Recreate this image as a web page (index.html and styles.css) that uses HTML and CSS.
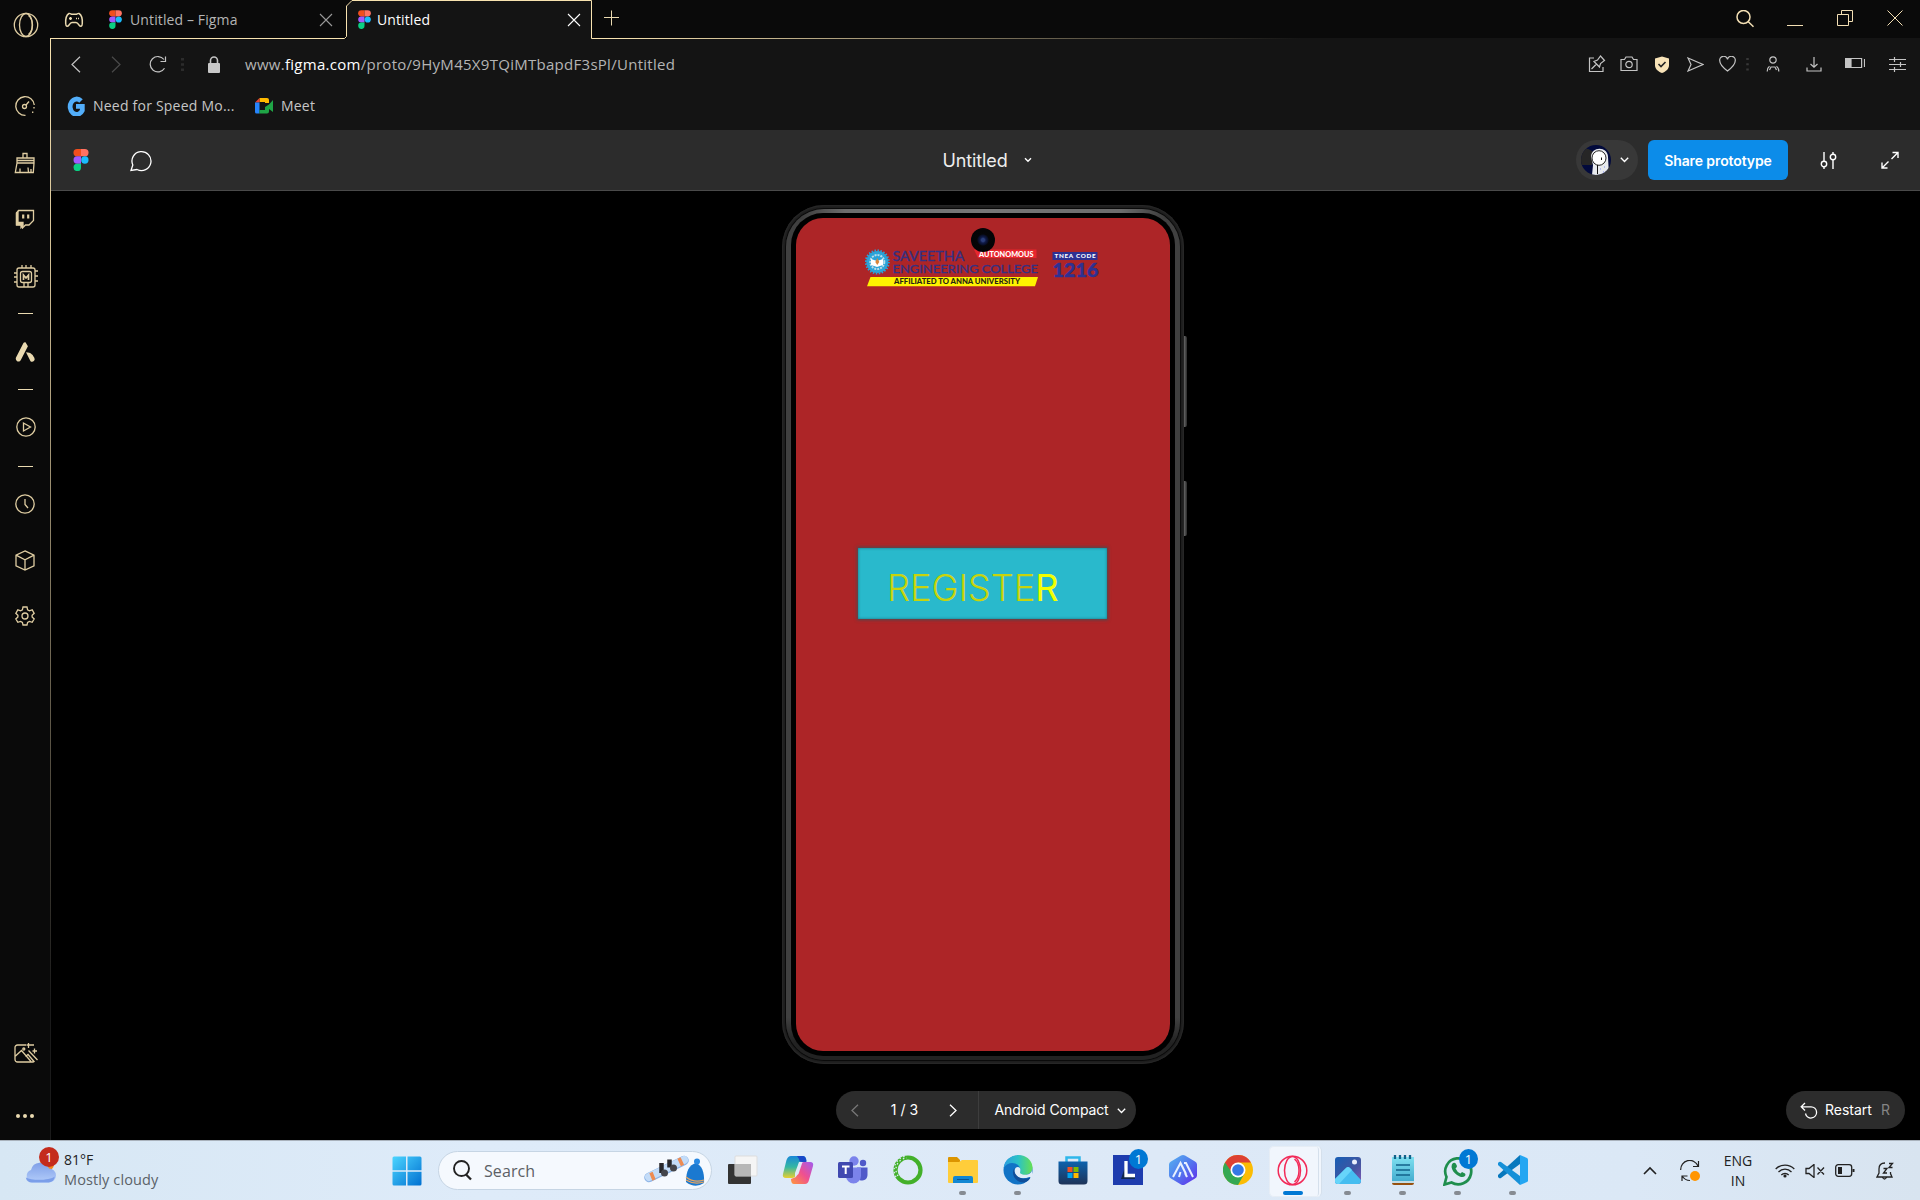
FILE: index.html
```html
<!DOCTYPE html>
<html lang="en">
<head>
<meta charset="utf-8">
<title>Untitled</title>
<link rel="stylesheet" href="styles.css">
</head>
<body>
<svg class="defs" width="0" height="0">
  <defs>
    <symbol id="figma" viewBox="0 0 14 20">
      <path d="M3.500 0H7v6.700H3.500a3.350 3.350 0 0 1 0-6.700z" fill="#f24e1e"/>
      <path d="M7 0h3.500a3.350 3.350 0 0 1 0 6.700H7z" fill="#ff7262"/>
      <path d="M3.500 6.700H7v6.600H3.500a3.300 3.300 0 0 1 0-6.600z" fill="#a259ff"/>
      <circle cx="10.500" cy="10" r="3.350" fill="#1abcfe"/>
      <path d="M3.500 13.300H7v3.350a3.400 3.400 0 1 1-3.500-3.350z" fill="#0acf83"/>
    </symbol>
    <linearGradient id="edgeX" gradientUnits="userSpaceOnUse" x1="50" y1="0" x2="1300" y2="0">
      <stop offset="0" stop-color="#f8e3b0"/><stop offset=".45" stop-color="#f8e3b0"/><stop offset="1" stop-color="#141414"/>
    </linearGradient>
    <linearGradient id="edgeY" gradientUnits="userSpaceOnUse" x1="0" y1="38" x2="0" y2="1000">
      <stop offset="0" stop-color="#f8e3b0"/><stop offset=".25" stop-color="#cdbb92"/><stop offset="1" stop-color="#1a1a1a"/>
    </linearGradient>
    <linearGradient id="win" x1="0" y1="0" x2="1" y2="1">
      <stop offset="0" stop-color="#4cd5ff"/><stop offset="1" stop-color="#0070d1"/>
    </linearGradient>
  </defs>
</svg>

<div class="desktop">
  <div class="browser">
    <aside class="sidebar">
      <div class="side s-opera"><svg width="26" height="26" viewBox="0 0 26 26"><circle cx="13" cy="13" r="11.700"/><ellipse cx="13" cy="13" rx="6.500" ry="11.500"/><path d="M15.500 3.500c5 4 5 15 0 19"/></svg></div>
      <div class="side s-gauge"><svg width="22" height="22" viewBox="0 0 22 22"><path d="M11.500 20.300A9.300 9.300 0 1 1 20.300 10"/><path d="M20 12v2.500M18.700 16.500v1.500" stroke-dasharray="1.500 1"/><circle cx="10.500" cy="11.500" r="2"/><path d="M12 10l3-3.500"/></svg></div>
      <div class="side s-broom"><svg width="22" height="22" viewBox="0 0 22 22"><path d="M9 6V1.500h4V6M3 6h17v5H3zM3 8.500h17M3 11L1.300 20.500h18L20 11M6 16.500v4M14 15.500l.500 5M17 17v3"/></svg></div>
      <div class="side s-twitch"><svg width="20" height="20" viewBox="0 0 20 20"><path d="M1.500 4l2-2.500h15v10L14 16h-3.500l-3 3v-3h-6z"/><path d="M3 3v10.500h5v3l-2 2v-3H1.500V4z" fill="#dfcda2"/><path d="M8.200 5.500v4M13.200 5.500v4" stroke-width="2.200"/></svg></div>
      <div class="side s-chip"><svg class="nudge" width="26" height="26" viewBox="0 0 26 26"><rect x="4" y="4" width="18" height="19" rx="2"/><rect x="7.500" y="7.500" width="11" height="11" rx="2"/><path d="M10.500 16v-5l2.500 3 2.500-3v5" stroke-width="1.700"/><path d="M1 9h3M1 13h3M1 18h3M22 7h3M22 12h3M22 17h3M9 1v3M13 1v3M18 1v3M11 19v4M15 19v4"/></svg></div>
      <div class="side s-dash1"><i></i></div>
      <div class="side s-aria"><svg width="20" height="20" viewBox="0 0 20 20"><path d="M10.500.300l2.400 3.900L5.700 18.200c-1.700 3-6 .300-4.700-2.700L8.200 1.500c.500-1 1.400-1.200 2.300-1.200z" fill="#eadab0" stroke="none"/><path d="M11 10.200c5 0 7.300 3 8.500 6.300.700 2.300-2 4.300-4 2.700z" fill="#eadab0" stroke="none"/></svg></div>
      <div class="side s-dash2"><i></i></div>
      <div class="side s-play"><svg class="nudge" width="20" height="20" viewBox="0 0 20 20"><circle cx="10" cy="10" r="9.200"/><path d="M7.500 6v8l7-4z"/></svg></div>
      <div class="side s-dash1"><i></i></div>
      <div class="side s-clock"><svg width="20" height="20" viewBox="0 0 20 20"><circle cx="10" cy="10" r="9.200"/><path d="M10 5v5.500l3 3.500"/></svg></div>
      <div class="side s-cube"><svg width="20" height="21" viewBox="0 0 20 21"><path d="M10 .900l9 4.300v10.600l-9 4.300-9-4.300V5.200zM1 5.200l9 4.600 9-4.600M10 9.800v10"/></svg></div>
      <div class="side s-gear"><svg width="20" height="20" viewBox="0 0 20 20"><circle cx="10" cy="10" r="3"/><path d="M8 1h4l.600 2.800 1.800 1 2.800-.900 2 3.400-2.100 1.900v1.800l2.100 1.900-2 3.400-2.800-.900-1.800 1L12 19H8l-.600-2.600-1.800-1-2.800.900-2-3.400L2.900 11V9.200L.800 7.300l2-3.400 2.800.900 1.800-1z"/></svg></div>
      <div class="side s-image"><svg class="nudge" width="24" height="22" viewBox="0 0 24 22"><path d="M12 3H3.500A2.500 2.500 0 0 0 1 5.500v12A2.500 2.500 0 0 0 3.500 20h15a2.500 2.500 0 0 0 2-1M1.500 14L7.500 8.500 17 19.500M11.500 14.500l2.500-2 6 7M14.500 8.500l9 9.500M14.500 1v5M12.500 3h4.500M20.500 6.500v5M18.500 9H23M17 3h3"/><circle cx="9.800" cy="7" r="1"/></svg></div>
      <div class="side s-dots"><svg width="18" height="4" viewBox="0 0 18 4"><g fill="#eadab0" stroke="none"><circle cx="2" cy="2" r="2"/><circle cx="9" cy="2" r="2"/><circle cx="16" cy="2" r="2"/></g></svg></div>
    </aside>

    <div class="window">
      <div class="tabstrip">
        <svg class="pad" width="20" height="16" viewBox="0 0 20 16"><path d="M5 1.500c1-.600 2 .800 3 .800h4c1 0 2-1.400 3-.800 2.500 1.500 3.500 6.500 3.300 10-.100 3.500-2 3.300-3.300 1.500-1-1.500-2-2.500-3-2.500H8c-1 0-2 1-3 2.500-1.300 1.800-3.200 2-3.300-1.500C1.500 8 2.500 3 5 1.500zM6.500 5v3M5 6.500h3M12 6.500h1M14 6.500h1"/></svg>
        <div class="tab first">
          <svg class="fav" width="13" height="19"><use href="#figma"/></svg>
          <span class="t-a">Untitled – Figma</span>
          <svg class="x" width="14" height="14" viewBox="0 0 14 14"><path d="M1 1l12 12M13 1L1 13"/></svg>
        </div>
        <div class="tab active">
          <svg class="fav" width="13" height="19"><use href="#figma"/></svg>
          <span class="t-b">Untitled</span>
          <svg class="x" width="14" height="14" viewBox="0 0 14 14"><path d="M1 1l12 12M13 1L1 13"/></svg>
        </div>
        <svg class="plus" width="16" height="16" viewBox="0 0 16 16"><path d="M7.500.500v15M0 7.500h15"/></svg>
        <div class="winbtns">
          <div><svg width="20" height="20" viewBox="0 0 20 20" stroke-width="1.500"><circle cx="8.500" cy="7" r="6.500"/><path d="M13.300 11.700l5.200 5"/></svg></div>
          <div><svg width="16" height="16" viewBox="0 0 16 16"><path d="M0 15.500h16"/></svg></div>
          <div><svg width="16" height="16" viewBox="0 0 16 16"><path d="M.500 4.500h11v11H.500zM4.500 4.500v-4h11v11h-4"/></svg></div>
          <div><svg width="16" height="16" viewBox="0 0 16 16"><path d="M.500.500l15 15M15.500.500l-15 15"/></svg></div>
        </div>
      </div>

      <div class="navbar">
        <svg class="n-back" width="10" height="17" viewBox="0 0 10 17"><path d="M9 .800L1 8.500l8 7.700"/></svg>
        <svg class="n-fwd" width="10" height="17" viewBox="0 0 10 17"><path d="M1 .800l8 7.700-8 7.700"/></svg>
        <svg class="n-rel" width="18" height="18" viewBox="0 0 18 18"><path d="M15.500 13.200A7.700 7.700 0 1 1 15 4.500M16.500 1.500v5h-5"/></svg>
        <svg class="n-sep" width="3" height="13" viewBox="0 0 3 13"><path d="M1.500 0v13" stroke-dasharray="2.500 2.700"/></svg>
        <svg class="n-lock" width="12" height="17" viewBox="0 0 12 17"><path d="M2.500 8V4.500a3.500 3.500 0 0 1 7 0V8"/><rect x="0" y="7" width="12" height="10" rx="1" fill="#c8c8c8" stroke="none"/></svg>
        <span class="url">www.<b>figma.com</b>/proto/9HyM45X9TQiMTbapdF3sPl/Untitled</span>
        <div class="tools">
          <div class="c24"><svg width="18" height="18" viewBox="0 0 18 18" stroke-width="1.300"><path d="M6 3H1.500v13.500H15V12M3.500 14l5-5M6 6.500l5.500 5.500 1-3.500 4-3-4-4.500-3 4z"/></svg></div>
          <div class="c40"><svg width="18" height="16" viewBox="0 0 18 16"><path d="M1 3.500h3.500L6 1h6l1.500 2.500H17v11H1z"/><circle cx="9" cy="8.500" r="3.200"/></svg></div>
          <div class="c26"><svg width="16" height="17" viewBox="0 0 16 17"><path d="M8 .500l7 2v6.500c0 4-3 6.500-7 8-4-1.500-7-4-7-8V2.500z" fill="#f8e3b8" stroke="none"/><path d="M4.500 8l2.500 2.500L11.500 6" stroke="#222" stroke-width="1.600"/></svg></div>
          <div class="c40"><svg width="17" height="15" viewBox="0 0 17 15"><path d="M1 1l15 6.500L1 14l3-6.500z"/></svg></div>
          <div class="c24"><svg width="17" height="16" viewBox="0 0 17 16"><path d="M8.500 15C3 10.800.800 8 .800 5A3.900 3.900 0 0 1 8.500 3.300 3.900 3.900 0 0 1 16.200 5c0 3-2.200 5.800-7.700 10z"/></svg></div>
          <div class="c16"><svg width="3" height="13" viewBox="0 0 3 13"><path d="M1.500 0v13" stroke="#383838" stroke-width="2.500" stroke-dasharray="2 3.300"/></svg></div>
          <div class="c36"><svg width="14" height="16" viewBox="0 0 14 16" stroke-width="1.500"><circle cx="7" cy="4" r="3.200"/><path d="M1.200 15.500c0-2.500.500-4 2.300-5.200M12.800 15.500c0-2.500-.500-4-2.300-5.200M3.500 14l1.500-3h4l1.500 3"/></svg></div>
          <div class="c45"><svg width="16" height="15" viewBox="0 0 16 15"><path d="M1 10.500v3.500h14v-3.500M8 0v10M4.500 7L8 10.300 11.500 7"/></svg></div>
          <div class="c38"><svg class="up" width="20" height="12" viewBox="0 0 20 12"><path d="M.600 1.500h16v9h-16zM19.500 2v8"/><path d="M1 2h5v8H1z" fill="#c4c4c4"/></svg></div>
          <div class="c46"><svg width="17" height="15" viewBox="0 0 17 15"><path d="M0 2.500h17M0 7.500h17M0 12.500h17M5.500 0v5M11.500 5v5M5.500 10v5"/></svg></div>
        </div>
      </div>

      <div class="bookmarks">
        <svg width="19" height="21" viewBox="0 0 19 21"><path d="M15 6A6.500 7.700 0 1 0 16.300 15.500v-4.200H10" fill="none" stroke="#52aefa" stroke-width="4.800"/></svg>
        <span class="bm-a">Need for Speed Mo...</span>
        <svg width="18" height="16" viewBox="0 0 18 16"><path d="M4.500 0H12q2 0 2 2v3h-4V4H4.500z" fill="#ffba00"/><path d="M4.500 0v4.500H0z" fill="#ea4335"/><path d="M0 4.500h4.500v11H1.500Q0 15.500 0 14z" fill="#2684fc"/><path d="M4.500 12H10V9l4-2.500L18 2v12l-4-3v2.500q0 2-2 2H4.500z" fill="#1fa546"/></svg>
        <span class="bm-b">Meet</span>
      </div>

      <div class="figbar">
        <div class="fig-left">
          <svg width="16" height="22"><use href="#figma"/></svg>
          <svg width="23" height="23" viewBox="0 0 23 23"><path d="M1 21.500l1.800-5.500A9.500 9.500 0 1 1 7 20.500z" fill="none" stroke="#fff" stroke-width="1.300"/></svg>
        </div>
        <div class="fig-title"><span>Untitled</span><svg width="8" height="6" viewBox="0 0 8 6"><path d="M1 1.200l3 3 3-3"/></svg></div>
        <div class="fig-right">
          <div class="avatar">
            <svg width="30" height="30" viewBox="0 0 30 30"><defs><clipPath id="av"><circle cx="15" cy="15" r="15"/></clipPath></defs><g clip-path="url(#av)"><path d="M0 0h30v30H0z" fill="#020a3c"/><path d="M0 6c5-4 9-2 13 2l-2 12H0z" fill="#262626"/><path d="M10 12C10 1 27 1 27 12l1 18H11l1-10z" fill="#e8eaee"/><ellipse cx="18" cy="13" rx="7" ry="7.300" fill="#fff" stroke="#222" stroke-width="1"/><path d="M16.500 20v9M20.500 12.500v2.500" stroke="#111"/><path d="M19 24h1M23 22h1M22 27h1" stroke="#7c8df0"/></g></svg>
            <svg width="9" height="6" viewBox="0 0 9 6"><path d="M.800.800l3.700 3.700L8.200.800"/></svg>
          </div>
          <button class="share">Share prototype</button>
          <svg class="sl" width="17" height="19" viewBox="0 0 17 19"><circle cx="4" cy="13" r="2.700"/><circle cx="13" cy="6" r="2.700"/><path d="M4 1v9.300M4 15.700V18M13 1v2M13 9v9"/></svg>
          <svg class="ex" width="20" height="19" viewBox="0 0 20 19"><path d="M12.500 1.500H18V7M18 1.500L11.500 8M2 11.500V17h5.500M2 17l6.500-6.500"/></svg>
        </div>
      </div>

      <main class="stage">
        <div class="phone">
          <div class="key k1"></div><div class="key k2"></div>
          <div class="bezel">
            <div class="screen">
              <div class="lens"></div>
              <svg class="crest" width="234" height="40" viewBox="865 248 234 40" font-family="Lato, sans-serif">
                <circle cx="877.300" cy="262" r="11" fill="#2aa3d8"/><circle cx="877.300" cy="262" r="11.500" fill="none" stroke="#2aa3d8" stroke-width="2" stroke-dasharray="1.500 1.500"/>
                <circle cx="877.300" cy="262" r="7" fill="none" stroke="#b9ddea" stroke-width="2" stroke-dasharray="2 1"/><path d="M871 259l6 2 6-2v6l-6 2-6-2z" fill="#fff"/><path d="M877.300 258l2 4-2 3-2-3z" fill="#d8863b"/>
                <g fill="#353082" stroke="#353082" stroke-width=".35">
                  <text x="892.500" y="260.900" font-size="13.800" textLength="72" lengthAdjust="spacingAndGlyphs">SAVEETHA</text>
                  <text x="892.500" y="272.800" font-size="12.300" textLength="145.500" lengthAdjust="spacingAndGlyphs">ENGINEERING COLLEGE</text>
                </g>
                <path d="M974 249.500h62.500v8.500H978z" fill="#e8262d"/>
                <text x="979" y="256.700" font-size="7" font-weight="900" fill="#fff" textLength="54.500" lengthAdjust="spacingAndGlyphs">AUTONOMOUS</text>
                <path d="M870.500 277H1038l-3 9.200H867z" fill="#fff200"/>
                <text x="894" y="283.900" font-size="7.400" font-weight="900" fill="#262216" textLength="126" lengthAdjust="spacingAndGlyphs">AFFILIATED TO ANNA UNIVERSITY</text>
                <path d="M1052.500 252h45v8h-45z" fill="#2e3192"/>
                <text x="1054.500" y="258.300" font-size="6.300" font-weight="900" fill="#fff" textLength="41" lengthAdjust="spacing">TNEA CODE</text>
                <text x="1052.500" y="277" font-size="19.500" font-weight="900" fill="#2e3192" stroke="#2e3192" stroke-width=".5" textLength="46" lengthAdjust="spacingAndGlyphs">1216</text>
              </svg>
              <div class="register"><span>REGISTE<b>R</b></span></div>
            </div>
          </div>
        </div>
        <div class="controls">
          <div class="pager">
            <svg class="dim" width="8" height="13" viewBox="0 0 8 13"><path d="M7 .800L1 6.500l6 5.700"/></svg>
            <span>1 / 3</span>
            <svg width="8" height="13" viewBox="0 0 8 13"><path d="M1 .800l6 5.700-6 5.700"/></svg>
          </div>
          <div class="flow"><span>Android Compact</span><svg width="9" height="6" viewBox="0 0 9 6"><path d="M.800.800l3.700 3.700L8.200.800"/></svg></div>
        </div>
        <div class="restart"><svg width="18" height="17" viewBox="0 0 18 17"><path d="M5 1L1.200 4.800 5 8.500M1.500 4.800H11a5.600 5.600 0 1 1-5.500 6.700"/></svg><span>Restart</span><em>R</em></div>
      </main>
    </div>
    <svg class="outline" width="1920" height="1140" viewBox="0 0 1920 1140"><path d="M50 38.500H344.500L346.500 36.500V6L352 .500H591.500V38.500H1920" stroke="url(#edgeX)"/><path d="M50 38h1v1102h-1z" fill="url(#edgeY)" stroke="none"/></svg>
  </div>

  <footer class="taskbar">
    <div class="weather">
      <svg width="36" height="38" viewBox="0 0 36 38"><defs><linearGradient id="cl" x1="0" y1="0" x2="0" y2="1"><stop offset="0" stop-color="#7f9fe8"/><stop offset="1" stop-color="#b3cdfa"/></linearGradient></defs><circle cx="22" cy="17" r="7" fill="#f7861b"/><path d="M7 35.500a6.500 6.500 0 0 1-1-12.500 9.500 9.500 0 0 1 18-1.500 7 7 0 0 1 0 14z" fill="url(#cl)"/><path d="M.800 30.500c6 3.500 24 3 29-1a7 7 0 0 1-6 6H7a6 6 0 0 1-6.200-5z" fill="#7b9ee9"/><circle cx="24" cy="10" r="10" fill="#c42b1c"/><text x="24" y="15" font-size="13" fill="#fff" text-anchor="middle" font-family="Open Sans, sans-serif">1</text></svg>
      <div><p class="deg">81°F</p><p class="sky">Mostly cloudy</p></div>
    </div>
    <div class="apps">
      <div class="start"><svg width="30" height="30" viewBox="0 0 30 30" fill="url(#win)"><path d="M2 .500h12v13.700H.500V2Q.500.500 2 .500zM15.500.500H28q1.500 0 1.500 1.500v12.200h-14zM.500 15.700H14v13.800H2Q.500 29.500.500 28zM15.500 15.700h14V28q0 1.500-1.500 1.500H15.500z"/></svg></div>
      <div class="search">
        <svg width="19" height="21" viewBox="0 0 19 21"><circle cx="8.500" cy="8.500" r="7.500" fill="none" stroke="#222" stroke-width="1.900"/><path d="M13 14.500l5 5" stroke="#222" stroke-width="2.300"/></svg>
        <span>Search</span>
        <svg class="snow" width="62" height="32" viewBox="0 0 62 32"><path d="M5 22.500L40 5.500" stroke="#8db4e6" stroke-width="9.500" stroke-linecap="round"/><path d="M5 22L40 5" stroke="#c3dcf8" stroke-width="8" stroke-linecap="round"/><path d="M7 17.500l3 7.500M35 3l3.500 7.500" stroke="#ed8b52" stroke-width="3.500"/><path d="M17.500 8v10M25.500 4.500v8" stroke="#27272b" stroke-width="4.500"/><circle cx="20.500" cy="18" r="3.500" fill="#44454b"/><circle cx="29.500" cy="13" r="3.500" fill="#44454b"/><path d="M42 27c0-11 3-17 10-19 7 3 8.500 11 8 20q-9 6-18-1z" fill="#1b79d0"/><circle cx="53" cy="6.500" r="3" fill="#2788e2"/><path d="M42 22c5 4 12 5 18 3M42 25c5 3 11 4 18 2" fill="none" stroke="#e9a660" stroke-width="1.200"/></svg>
      </div>
      <div class="app"><svg width="30" height="30" viewBox="0 0 30 30"><rect x="0" y="9" width="23" height="20" rx="1" fill="#333"/><rect x="7" y="1" width="22" height="20" rx="1" fill="#f5f5f5" stroke="#ddd"/><path d="M7 9h16v12H7z" fill="#b7b7b7"/></svg></div>
      <div class="app"><svg width="32" height="30" viewBox="0 0 32 30"><defs><linearGradient id="co" x1="0" y1="0" x2="0" y2="1"><stop stop-color="#1988d8"/><stop offset=".5" stop-color="#35b7a3"/><stop offset="1" stop-color="#e9d02f"/></linearGradient><linearGradient id="cp" x1="1" y1="0" x2="0" y2="1"><stop stop-color="#a05cf0"/><stop offset=".5" stop-color="#ef5090"/><stop offset="1" stop-color="#ff983c"/></linearGradient></defs><path d="M9 1h12q3 0 3.500 5l-6 1L14 20q-1 3-4 3H4q-4 0-3-4L4.500 5Q6 1 9 1z" fill="url(#co)"/><path d="M23 29H12q-3 0-3-5l5-2 4-12q1-3 4-3h6q4 0 3 4l-4 14q-1 4-4 4z" fill="url(#cp)"/><path d="M15 1h6q3 0 3.500 6H20q-3 0-3-3z" fill="#1848c8"/><path d="M13 18l4-11h3.500l-4 12-3.500 3z" fill="#dfeaf8"/></svg></div>
      <div class="app"><svg width="30" height="28" viewBox="0 0 30 28"><circle cx="25" cy="7" r="3.200" fill="#5059c9"/><circle cx="16" cy="5" r="4.700" fill="#7b83eb"/><path d="M19 11.500h10.500V19a5.500 5.500 0 0 1-8 5z" fill="#5059c9"/><path d="M8 11.500h15V20a7.500 7.500 0 0 1-15 0z" fill="#7b83eb"/><rect x="0" y="6" width="15" height="16" rx="1.500" fill="#4048b0"/><path d="M4 10.500h7.500M7.700 10.500V18" stroke="#fff" stroke-width="2"/></svg></div>
      <div class="app"><svg width="30" height="30" viewBox="0 0 30 30"><circle cx="15" cy="15" r="12.500" fill="none" stroke="#43b02a" stroke-width="4.200"/><path d="M3 22A14 14 0 0 1 14 1M5 21A11.500 11.500 0 0 1 14 3" fill="none" stroke="#dce9f6" stroke-width="1.300" stroke-dasharray="1.500 2.500"/></svg></div>
      <div class="app run"><svg width="32" height="28" viewBox="0 0 32 28"><path d="M1 2q0-1 1-1h8l3 3v6H1z" fill="#dc9500"/><path d="M1 6h11l3-2h15q1 0 1 1v21q0 1-1 1H2q-1 0-1-1z" fill="#ffcd3a"/><path d="M6 27v-5q0-2 2-2h16q2 0 2 2v5z" fill="#1287d3"/><path d="M10 23.500h12" stroke="#0a5592"/></svg></div>
      <div class="app run"><svg width="30" height="30" viewBox="0 0 30 30"><defs><linearGradient id="ed" x1="0" y1="0" x2="1" y2="0"><stop stop-color="#2b9de0"/><stop offset=".5" stop-color="#2bc2c7"/><stop offset="1" stop-color="#66e052"/></linearGradient></defs><circle cx="15" cy="15" r="14.500" fill="#1173c6"/><path d="M.700 13C2-4 28-4 29.500 12c.500 7-8 10-13 7-1-1 1-2 1-4C17 7 5 5 .700 13z" fill="url(#ed)"/><path d="M17.500 18.500c-1-1 0-2 0-3.500 0-3-3-4-5-2-4 6 3 13 14 9q1 0 .700 1l1.800-1V15c-1 5-8 6-11.500 3.500z" fill="#e0ecf8"/><path d="M11.500 13c-4 5 0 15 10 14.500q4-1 6-5C19 26 10 21 11.500 13z" fill="#104e9a"/></svg></div>
      <div class="app"><svg width="30" height="30" viewBox="0 0 30 30"><defs><linearGradient id="st" x1="0" y1="0" x2="0" y2="1"><stop stop-color="#0d62ad"/><stop offset="1" stop-color="#1e3358"/></linearGradient></defs><path d="M8.500 7V2.500h13V7" fill="none" stroke="#2fb7ea" stroke-width="2.500"/><path d="M.500 6.500h29V26q0 3.500-3.500 3.500H4Q.500 29.500.500 26z" fill="url(#st)"/><path d="M9.500 12h5v5h-5z" fill="#f25022"/><path d="M15.500 12h5v5h-5z" fill="#7fba00"/><path d="M9.500 18h5v5h-5z" fill="#00a4ef"/><path d="M15.500 18h5v5h-5z" fill="#ffb900"/></svg></div>
      <div class="app"><svg width="30" height="30" viewBox="0 0 30 30"><path d="M0 0h30v30H0z" fill="#1e3cae"/><path d="M9 21l3-9v10h10v2H8z" fill="#10264e"/><path d="M13 6v14.500h9" fill="none" stroke="#fff" stroke-width="3.300"/></svg><b class="badge">1</b></div>
      <div class="app"><svg width="28" height="30" viewBox="0 0 28 30"><defs><linearGradient id="hx" x1="0" y1="0" x2="1" y2="1"><stop stop-color="#56b4f0"/><stop offset=".5" stop-color="#5278ee"/><stop offset="1" stop-color="#6227ec"/></linearGradient></defs><path d="M12 .500q2-1 4 0l10 6q2 1 2 3v11q0 2-2 3l-10 6q-2 1-4 0l-10-6q-2-1-2-3v-11q0-2 2-3z" fill="url(#hx)"/><path d="M4 22l7.500-14 5.500 11M10 22l1.500-5M15 8h2l7 14M18 22l-2-4" fill="none" stroke="#e8f1ff" stroke-width="2"/></svg></div>
      <div class="app"><svg width="30" height="30" viewBox="0 0 30 30"><circle cx="15" cy="15" r="15" fill="#fbbc04"/><path d="M2 7.500A15 15 0 0 0 15 30l6.500-11.500L15 15z" fill="#34a853"/><path d="M2 7.500a15 15 0 0 1 26 0H15l-6 10z" fill="#dd4032"/><circle cx="15" cy="15" r="7.500" fill="#fff"/><circle cx="15" cy="15" r="5.800" fill="#3578e5"/></svg></div>
      <div class="app current"><svg width="31" height="31" viewBox="0 0 31 31" fill="none" stroke="#f22a58" stroke-width="1.500"><circle cx="15.500" cy="15.500" r="14.300"/><ellipse cx="15.500" cy="15.500" rx="8" ry="14"/><path d="M17.500 4c6 5 6 18 0 23"/></svg></div>
      <div class="app run"><svg width="26" height="27" viewBox="0 0 26 27"><defs><linearGradient id="ph" x1="0" y1="0" x2="1" y2="1"><stop stop-color="#175eb4"/><stop offset=".6" stop-color="#4355a0"/><stop offset="1" stop-color="#8358b6"/></linearGradient></defs><rect width="26" height="27" rx="3" fill="url(#ph)"/><path d="M0 22L11 11q2-2 4 0l11 12v1q0 3-3 3H3q-3 0-3-3z" fill="#45bdf0"/><path d="M0 22L11 11q2-2 4 0l2 2L4 27H3q-3 0-3-3z" fill="#67d5fa"/><circle cx="19.500" cy="5" r="2.500" fill="#e9effb"/></svg></div>
      <div class="app run"><svg width="22" height="31" viewBox="0 0 22 31"><defs><linearGradient id="np" x1="0" y1="0" x2="0" y2="1"><stop stop-color="#7fe0f0"/><stop offset="1" stop-color="#3fa9cd"/></linearGradient></defs><path d="M0 25h22v3q0 2-2 2H2q-2 0-2-2z" fill="#96510f"/><rect y="2" width="22" height="26" fill="url(#np)"/><path d="M0 27h22" stroke="#eee" stroke-width="1.500"/><path d="M3 0v4M8 0v4M13 0v4M18 0v4" stroke="#12628a" stroke-width="2.300"/><path d="M4 10h14M4 15h14M4 20h14" stroke="#12628a" stroke-width="1.700"/></svg></div>
      <div class="app run"><svg width="30" height="31" viewBox="0 0 30 31"><path d="M1.500 29.500l2-7.500A13 13 0 1 1 8.500 27.500z" fill="none" stroke="#1f8e4d" stroke-width="2.700"/><path d="M10 8q2-1 3 1l1 2q0 1-1.500 2.500 1.500 3.500 5 5L19 17l3 1.500q1 1 0 2.500c-2 2-5 1-8-1s-5-5-5.500-8q0-3 1.500-4z" fill="#1f8e4d"/></svg><b class="badge">1</b></div>
      <div class="app run"><svg width="30" height="30" viewBox="0 0 30 30"><path d="M22 0l7 3q1 .500 1 1.500v21q0 1-1 1.500l-7 3z" fill="#24a6f2"/><path d="M22 0v9L3 23q-1 .500-2 0l-1-1q-.500-1 0-2z" fill="#0878bd"/><path d="M22 30v-9L3 7Q2 6.500 1 7L0 8q-.500 1 0 2z" fill="#1690d8"/></svg></div>
    </div>
    <div class="tray">
      <svg width="14" height="9" viewBox="0 0 14 9"><path d="M1 8l6-6 6 6" stroke-width="1.600"/></svg>
      <svg class="sync" width="20" height="22" viewBox="0 0 20 22"><path d="M.700 10A9 9 0 0 1 18 6M18.500 1v5.500H13M10 20.500Q5 20.500 2 16M2 21v-5h5.500" stroke-width="1.200"/><circle cx="15" cy="16" r="5" fill="#ff9500" stroke="none"/></svg>
      <div class="lang">ENG<br>IN</div>
      <svg class="wifi" width="20" height="15" viewBox="0 0 20 15"><path d="M.700 6a13 13 0 0 1 18.600 0M3.500 9a9 9 0 0 1 13 0M6.300 12a5.300 5.300 0 0 1 7.400 0"/><circle cx="10" cy="13" r="1.600" fill="#222" stroke="none"/></svg>
      <svg class="vol" width="20" height="14" viewBox="0 0 20 14"><path d="M1 4.500h3l5-4v13l-5-4H1zM12.500 3.500l6.500 7M19 3.500l-6.500 7"/></svg>
      <svg class="bat" width="20" height="13" viewBox="0 0 20 13"><rect x=".700" y=".700" width="16" height="11.600" rx="2.500"/><path d="M3 3h4v7H3z" fill="#222" stroke="none"/><path d="M18.500 5v3" stroke-width="2"/></svg>
      <svg class="bell" width="18" height="18" viewBox="0 0 18 18"><path d="M9 1Q3 1 3 7v4l-2 4h15l-1.500-3.500V10M6.500 15.500q2 3 4 0M7.500 6.500H11l-3.500 4.500H11M13 1.500h3.500L13 5.500h3.500"/></svg>
    </div>
  </footer>
</div>
</body>
</html>
```
FILE: styles.css
```css
* { box-sizing: border-box; }
body { margin: 0; background: #000; font-family: "Open Sans", "Noto Sans", sans-serif; font-size: 14px; }
p { margin: 0; }
svg { flex: none; display: block; }
.defs { position: absolute; }
.desktop { width: 1920px; height: 1200px; display: flex; flex-direction: column; overflow: hidden; }
.browser { position: relative; display: flex; height: 1140px; background: #0a0a0a; }
.outline { position: absolute; left: 0; top: 0; fill: none; pointer-events: none; }

.sidebar { width: 51px; display: flex; flex-direction: column; background: #0a0a0a; }
.side { display: flex; align-items: center; justify-content: center; padding-right: 2px; }
.side svg { fill: none; stroke: #dfcda2; stroke-width: 1.3; }
.side i { width: 15px; height: 1px; background: #eadab0; }
.side .nudge { margin-left: 2px; }
.s-opera { height: 50px; margin-bottom: 28px; padding-right: 0; }
.s-gauge { height: 56px; }
.s-broom { height: 57px; }
.s-twitch { height: 56px; padding-right: 1px; }
.s-chip { height: 60px; }
.s-dash1 { height: 13px; padding-right: 0; }
.s-aria { height: 64px; padding-right: 1px; }
.s-dash2 { height: 11px; padding-right: 0; }
.s-play { height: 65px; padding-bottom: 1px; }
.s-clock { height: 61px; }
.s-cube { height: 54px; padding-bottom: 1px; }
.s-gear { height: 57px; padding-bottom: 1px; }
.s-image { height: 55px; margin-top: auto; margin-bottom: 11px; padding-bottom: 1px; }
.s-dots { height: 48px; padding-right: 1px; }

.window { flex: 1; display: flex; flex-direction: column; }
.tabstrip { display: flex; align-items: center; height: 39px; background: #0a0a0a; }
.pad { margin-left: 13px; fill: none; stroke: #eadab0; stroke-width: 1.5; }
.tab { display: flex; align-items: center; height: 39px; color: #b4b4b4; }
.tab .x { margin-left: auto; fill: none; stroke: currentColor; stroke-width: 1.1; }
.tab span { margin-left: 8px; white-space: nowrap; }
.first { width: 263px; padding: 0 14px 0 25px; letter-spacing: .12px; }
.first .x { stroke: #999; }
.active { width: 245px; padding: 0 11px 0 11px; background: #141414; color: #fff; clip-path: polygon(6px 0, 100% 0, 100% 100%, 0 100%, 0 6px); }
.active .t-b { margin-left: 6px; letter-spacing: .1px; }
.plus { margin-left: 12px; margin-bottom: 4px; fill: none; stroke: #eadab0; }
.winbtns { display: flex; margin-left: auto; }
.winbtns div { width: 50px; display: flex; justify-content: center; }
.winbtns svg { fill: none; stroke: #f3dfb4; }

.navbar { display: flex; align-items: center; height: 50px; background: #141414; }
.navbar svg { fill: none; stroke: #c4c4c4; stroke-width: 1.2; }
.n-back { margin-left: 20px; }
.navbar .n-fwd { margin-left: 30px; stroke: #4a4a4a; }
.n-rel { margin-left: 28px; }
.navbar .n-sep { margin-left: 14px; stroke: #2c2c2c; stroke-width: 3; }
.navbar .n-lock { margin-left: 24px; stroke-width: 1.6; }
.url { margin-left: 25px; color: #b4b4b4; font-size: 15px; letter-spacing: .28px; white-space: nowrap; }
.url b { font-weight: 400; color: #fff; }
.tools { display: flex; align-items: center; margin-left: auto; }
.tools div { display: flex; justify-content: center; }
.c16 { width: 16px; } .c24 { width: 24px; } .c26 { width: 26px; } .c36 { width: 36px; }
.c38 { width: 38px; } .c40 { width: 40px; } .c45 { width: 45px; } .c46 { width: 46px; }
.up { margin-bottom: 3px; }

.bookmarks { display: flex; align-items: center; height: 41px; padding: 0 0 8px 15px; background: #141414; color: #c6c6c6; }
.bm-a { margin: 0 20px 0 8px; width: 142px; letter-spacing: .22px; white-space: nowrap; }
.bm-b { margin-left: 8px; letter-spacing: .2px; }

.figbar { display: grid; grid-template-columns: 1fr auto 1fr; align-items: center; height: 61px; background: #2c2c2c; border-bottom: 1px solid #4a4a4a; font-family: Inter, sans-serif; }
.fig-left { display: flex; align-items: center; gap: 41px; padding-left: 22px; }
.fig-title { display: flex; align-items: center; gap: 16px; margin-left: 3px; color: #eee; font-size: 18px; letter-spacing: -.1px; }
.fig-title span { padding-top: 1px; }
.fig-title svg, .avatar svg:last-child, .sl, .ex { fill: none; stroke: #fff; stroke-width: 1.4; }
.fig-right { display: flex; align-items: center; justify-content: flex-end; padding-right: 20px; }
.avatar { display: flex; align-items: center; gap: 9px; width: 62px; height: 40px; padding-left: 5px; border-radius: 20px; background: #383838; }
.share { width: 140px; height: 40px; margin: 0 32px 0 10px; padding: 0; border: 0; border-radius: 6px; background: #0c8ce9; color: #fff; font: 600 14px Inter, sans-serif; letter-spacing: -.1px; }
.ex { margin-left: 43px; }

.stage { position: relative; flex: 1; display: flex; flex-direction: column; align-items: center; padding: 14px 0 11px; background: #000; font-family: Inter, sans-serif; color: #fff; }
.phone { position: relative; width: 402px; height: 859px; margin-left: -5px; padding: 4px; border-radius: 42px; background: #1d1d1d; box-shadow: inset 0 0 2px 1px #2b2b2b; }
.bezel { height: 851px; padding: 9px 10px; border-radius: 38px; background: linear-gradient(90deg, #2c2c2c, #6c6c6c 15%, #777 50%, #6c6c6c 85%, #2c2c2c) top / 100% 10px no-repeat, linear-gradient(#404040 95%, #222 98%); box-shadow: 0 0 0 1px #0a0a0a; }
.screen { position: relative; height: 833px; border-radius: 27px; background: #ad2527; box-shadow: 0 0 0 5px #000; display: flex; flex-direction: column; align-items: center; padding-top: 30px; }
.lens { position: absolute; z-index: 1; left: 175px; top: 9.500px; width: 24px; height: 24px; border-radius: 50%; background: radial-gradient(circle, #2a3d7a 0 1.500px, #0f1a48 3px, #080d25 5px, #050507 6px, #020204 100%); }
.crest { margin-left: -3px; }
.register { width: 249px; height: 71px; margin: 260px 1px 0 0; padding-left: 29px; display: flex; align-items: center; background: #29b9cc; box-shadow: 0 0 3px 1px #4a4a50, inset 0 0 3px #17717e; color: #c8d40c; font-size: 36.300px; font-weight: 350; }
.register span { padding-top: 9px; line-height: 1; letter-spacing: -.08px; }
.register b { font-weight: 400; color: #f2ff00; }
.key { position: absolute; right: -3px; width: 3px; border-radius: 0 2px 2px 0; background: linear-gradient(90deg, #666, #2a2a2a); }
.k1 { top: 131px; height: 91px; } .k2 { top: 276px; height: 55px; }

.controls { display: flex; align-items: center; width: 300px; height: 38px; margin-top: auto; border-radius: 19px; background: #2c2c2c; font-size: 14px; }
.controls svg, .restart svg { fill: none; stroke: #fff; stroke-width: 1.3; }
.controls .dim { stroke: #777; }
.pager { display: flex; align-items: center; justify-content: space-between; width: 143px; height: 38px; padding: 0 20px 0 15px; border-right: 1px solid #3d3d3d; }
.pager span { padding: 0 0 2px 1px; }
.flow { display: flex; align-items: center; gap: 8px; padding-left: 16px; white-space: nowrap; letter-spacing: -.12px; }
.flow span { padding-bottom: 1px; }
.flow svg { margin-top: 2px; }
.restart { position: absolute; right: 15px; bottom: 11px; display: flex; align-items: center; width: 119px; height: 38px; padding-left: 14px; border-radius: 19px; background: #2c2c2c; font-size: 14px; }
.restart span { margin-left: 7px; padding-bottom: 1px; }
.restart em { margin-left: 9px; padding-bottom: 1px; font-style: normal; color: #858585; }

.taskbar { display: flex; height: 60px; border-top: 1px solid #a9b2bc; background: linear-gradient(90deg, #d7e7f4, #deebf9 25%, #dde9f7 60%, #dbe8f6 85%, #d8e4f0); color: #222; }
.weather { display: flex; width: 378px; padding: 6px 0 0 25px; gap: 3px; }
.weather p { line-height: 20px; font-size: 14px; }
.weather .deg { margin-top: 3px; }
.weather .sky { color: #5b6268; font-size: 14.500px; letter-spacing: .12px; }
.apps { display: flex; align-items: center; }
.start { width: 60px; padding-left: 14px; }
.search { display: flex; align-items: center; width: 274px; height: 39px; margin-right: 3px; padding: 0 5px 0 14px; border: 1px solid #c6d5e4; border-radius: 20px; background: #f5f9fe; color: #5c6065; font-size: 16px; }
.search span { margin-left: 12px; letter-spacing: .1px; }
.snow { margin-left: auto; }
.app { position: relative; display: flex; align-items: center; justify-content: center; width: 55px; height: 59px; }
.app > svg { margin-bottom: 1px; }
.run::after, .current::after { content: ""; position: absolute; bottom: 5px; left: 24px; width: 7px; height: 4px; border-radius: 2px; background: #868b92; }
.current::before { content: ""; position: absolute; left: 4px; top: 5px; width: 48px; height: 49px; border: 1px solid #e6edf5; border-right: 4px double #d5e0ec; border-radius: 5px; background: #f1f6fd; }
.current svg { position: relative; }
.current::after { left: 18px; width: 20px; background: #0078d4; }
.badge { position: absolute; right: 7px; top: 8px; width: 19px; height: 20px; border-radius: 50%; background: #0078d4; color: #fff; font: 400 13px/20px "Open Sans", sans-serif; text-align: center; }
.tray { display: flex; align-items: center; margin-left: auto; padding-right: 26px; }
.tray svg { fill: none; stroke: #222; stroke-width: 1.3; }
.sync { margin-left: 23px; }
.lang { width: 40px; margin: 0 17px 0 18px; text-align: center; font-size: 14px; line-height: 20px; }
.vol { margin-left: 10px; } .bat { margin-left: 10px; } .bell { margin-left: 21px; }
```
